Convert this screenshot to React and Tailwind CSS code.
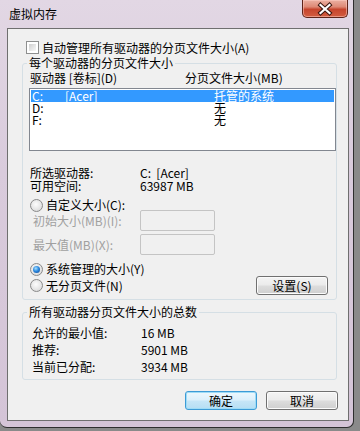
import React from "react";

function Radio({ checked }) {
  return (
    <span className="w-[13px] h-[13px] shrink-0 rounded-full border border-[#8a8a8a] bg-[radial-gradient(circle_at_45%_40%,#fdfdfd_0%,#e6e6e6_55%,#cfcfcf_100%)] flex items-center justify-center">
      {checked && (
        <span className="w-[7px] h-[7px] rounded-full bg-[radial-gradient(circle_at_40%_35%,#a8e0ff_0%,#2d8be0_45%,#0d3f8c_100%)]" />
      )}
    </span>
  );
}

function Btn({ children, def, className = "" }) {
  return (
    <div
      className={
        "h-[19px] w-[72px] rounded-[3px] border flex items-center justify-center leading-[12px] " +
        (def
          ? "border-[#3d9bd6] bg-[linear-gradient(180deg,#eef8fd_0%,#dcf0fb_48%,#c6e6f7_52%,#b5def4_100%)] shadow-[inset_0_0_0_1px_#9fdcf6]"
          : "border-[#707070] bg-[linear-gradient(180deg,#f4f4f4_0%,#ebebeb_48%,#dddddd_52%,#cfcfcf_100%)] shadow-[inset_0_0_0_1px_#fbfbfb]") +
        " " +
        className
      }
    >
      {children}
    </div>
  );
}

export default function App() {
  return (
    <div className="w-[360px] h-[431px] bg-[#8a8a8a] overflow-hidden font-['Noto_Sans_CJK_SC',sans-serif] text-[12px] leading-[12px] text-black">
      <div className="w-[354px] h-[428px] border-r border-b border-[#2e2e2e] rounded-bl-[7px] rounded-br-[7px] bg-[linear-gradient(180deg,#e2d7e4_0%,#d9cbdc_40%,#d4c4d7_100%)] pl-[7px] pr-[4px] flex flex-col">
        <div className="h-[28px] flex justify-between items-start">
          <span className="ml-[2px] mt-[7px] leading-[13px] text-[12px]">虚拟内存</span>
          <div className="w-[46px] h-[18px] mr-[1px] rounded-b-[5px] border border-t-0 border-[#5e2419] bg-[linear-gradient(180deg,#ebb0a2_0%,#de8a76_40%,#c6452d_55%,#d35d40_100%)] shadow-[inset_0_0_0_1px_rgba(255,210,200,0.5)]">
            <svg width="46" height="18" viewBox="0 0 46 18" className="block -ml-[1px]">
              <path d="M18.5 5 L27.5 13 M27.5 5 L18.5 13" stroke="#3b1710" strokeWidth="4.2" strokeLinecap="square" fill="none" />
              <path d="M18.5 5 L27.5 13 M27.5 5 L18.5 13" stroke="#ffffff" strokeWidth="2.2" strokeLinecap="square" fill="none" />
            </svg>
          </div>
        </div>

        <div className="w-[342px] h-[393px] border border-[#6f6f6f] bg-[#f0f0f0] flex flex-col">
          {/* auto manage checkbox */}
          <div className="flex items-center ml-[18px] mt-[12px] h-[13px]">
            <span className="w-[13px] h-[13px] border border-[#8e8f8f] bg-white p-[2px] shrink-0">
              <span className="block w-full h-full bg-[linear-gradient(135deg,#cfcfcf_0%,#e8e8e8_60%,#f6f6f6_100%)]" />
            </span>
            <span className="ml-[3px]">自动管理所有驱动器的分页文件大小(A)</span>
          </div>

          {/* group 1 */}
          <fieldset className="ml-[14px] mt-[2px] w-[315px] min-w-0 border border-[#d5dfe5] rounded-[3px] pb-[4px]">
            <legend className="ml-[4px] px-[2px] leading-[14px]">每个驱动器的分页文件大小</legend>
            <div className="flex mt-[2px] pl-[7px] h-[12px]">
              <span className="w-[155px]">驱动器 [卷标](D)</span>
              <span>分页文件大小(MB)</span>
            </div>
            <div className="ml-[6px] mt-[4px] w-[307px] h-[63px] border border-[#828790] bg-white p-[1px]">
              <div className="flex h-[12px] pl-[1px] bg-[#3399ff] text-white">
                <span className="w-[33px]">C:</span>
                <span className="w-[149px]">[Acer]</span>
                <span>托管的系统</span>
              </div>
              <div className="flex h-[12px] pl-[1px]">
                <span className="w-[182px]">D:</span>
                <span>无</span>
              </div>
              <div className="flex h-[12px] pl-[1px]">
                <span className="w-[182px]">F:</span>
                <span>无</span>
              </div>
            </div>
            <div className="flex mt-[15px] pl-[7px] h-[13px] leading-[13px]">
              <span className="w-[110px]">所选驱动器:</span>
              <span>C:&nbsp;&nbsp;[Acer]</span>
            </div>
            <div className="flex pl-[7px] h-[13px] leading-[13px]">
              <span className="w-[110px]">可用空间:</span>
              <span>63987 MB</span>
            </div>
            <div className="flex items-center mt-[7px] pl-[7px] h-[12px]">
              <Radio />
              <span className="ml-[3px]">自定义大小(C):</span>
            </div>
            <div className="flex items-center mt-[-1px] pl-[10px] h-[21px]">
              <span className="w-[107px] text-[#a0a0a0]">初始大小(MB)(I):</span>
              <span className="w-[75px] h-[21px] border border-[#c4c4c4] rounded-[2px]" />
            </div>
            <div className="flex items-center mt-[3px] pl-[10px] h-[21px]">
              <span className="w-[107px] text-[#a0a0a0]">最大值(MB)(X):</span>
              <span className="w-[75px] h-[21px] border border-[#c4c4c4] rounded-[2px]" />
            </div>
            <div className="flex items-center mt-[8px] pl-[7px] h-[12px]">
              <Radio checked />
              <span className="ml-[3px]">系统管理的大小(Y)</span>
            </div>
            <div className="flex items-center justify-between mt-[1px] pl-[7px] pr-[8px] h-[19px]">
              <div className="flex items-center">
                <Radio />
                <span className="ml-[3px]">无分页文件(N)</span>
              </div>
              <Btn>设置(S)</Btn>
            </div>
          </fieldset>

          {/* group 2 */}
          <fieldset className="ml-[14px] mt-[5px] w-[315px] min-w-0 border border-[#d5dfe5] rounded-[3px] pb-[6px]">
            <legend className="ml-[4px] px-[2px] leading-[14px]">所有驱动器分页文件大小的总数</legend>
            <div className="flex mt-[8px] pl-[9px] h-[12px]">
              <span className="w-[109px]">允许的最小值:</span>
              <span>16 MB</span>
            </div>
            <div className="flex mt-[5px] pl-[9px] h-[12px]">
              <span className="w-[109px]">推荐:</span>
              <span>5901 MB</span>
            </div>
            <div className="flex mt-[5px] pl-[9px] h-[12px]">
              <span className="w-[109px]">当前已分配:</span>
              <span>3934 MB</span>
            </div>
          </fieldset>

          <div className="flex justify-end gap-[9px] pr-[10px] mt-[11px]">
            <Btn def>确定</Btn>
            <Btn>取消</Btn>
          </div>
        </div>
      </div>
    </div>
  );
}
